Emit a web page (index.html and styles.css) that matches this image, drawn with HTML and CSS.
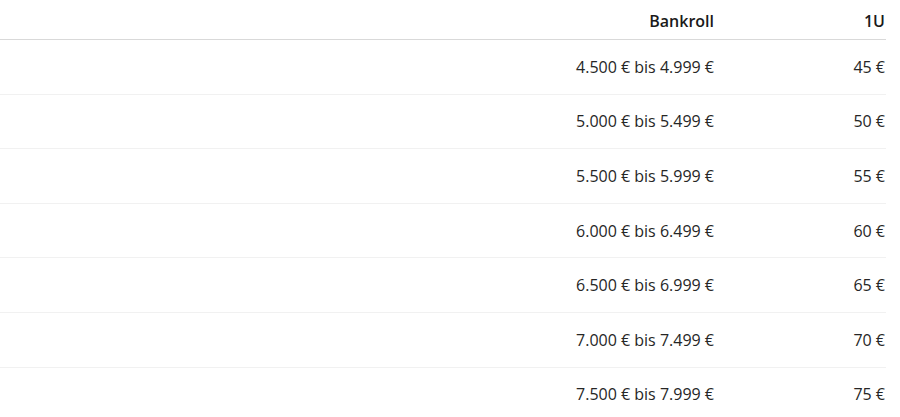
FILE: index.html
```html
<!DOCTYPE html>
<html lang="de">
<head>
    <meta charset="UTF-8">
    <meta name="viewport" content="width=device-width, initial-scale=1.0">
    <title>Bankroll</title>
    <link rel="stylesheet" href="styles.css">
</head>
<body>
    <div class="wrap">
        <table class="unit-table">
            <colgroup>
                <col>
                <col class="col-range">
                <col class="col-unit">
            </colgroup>
            <thead>
                <tr>
                    <th></th>
                    <th>Bankroll</th>
                    <th>1U</th>
                </tr>
            </thead>
            <tbody>
                <tr><td></td><td>4.500 € bis 4.999 €</td><td>45 €</td></tr>
                <tr><td></td><td>5.000 € bis 5.499 €</td><td>50 €</td></tr>
                <tr><td></td><td>5.500 € bis 5.999 €</td><td>55 €</td></tr>
                <tr><td></td><td>6.000 € bis 6.499 €</td><td>60 €</td></tr>
                <tr><td></td><td>6.500 € bis 6.999 €</td><td>65 €</td></tr>
                <tr><td></td><td>7.000 € bis 7.499 €</td><td>70 €</td></tr>
                <tr><td></td><td>7.500 € bis 7.999 €</td><td>75 €</td></tr>
            </tbody>
        </table>
    </div>
</body>
</html>
```

FILE: styles.css
```css
body {
    margin: 0;
    background: #fff;
    font-family: "Open Sans", "Noto Sans", sans-serif;
    color: #262626;
}
.wrap {
    padding-top: 9px;
}
.unit-table {
    width: 886px;
    border-collapse: collapse;
    table-layout: fixed;
    font-size: 16px;
}
.col-unit {
    width: 172px;
}
.unit-table th,
.unit-table td {
    text-align: right;
    line-height: 24px;
    padding: 14.8px 0;
}
.unit-table th {
    font-weight: 600;
    color: #1a1a1a;
    padding: 0 0 6px;
    border-bottom: 1px solid #d9d9d9;
}
.unit-table td {
    border-bottom: 1px solid #f1f1f1;
}
.unit-table th:last-child,
.unit-table td:last-child {
    padding-right: 1px;
}
```
